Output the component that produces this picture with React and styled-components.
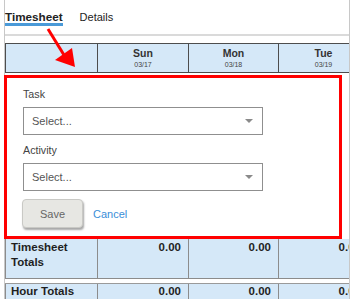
import React from 'react';
import styled, { createGlobalStyle } from 'styled-components';

const GlobalStyle = createGlobalStyle`
    html, body {
        margin: 0;
        padding: 0;
        background: #fff;
        overflow: hidden;
    }
    body {
        font-family: "Liberation Sans", Arial, sans-serif;
    }
`;

const Page = styled.div`
    position: relative;
    width: 352px;
    height: 299px;
    overflow: hidden;
`;

const Frame = styled.div`
    margin-left: 4px;
    width: 346px;
    height: 299px;
    box-sizing: border-box;
    padding: 0 1px;
    box-shadow: inset 1px 0 0 #c8c8c8, inset -1px 0 0 #c8c8c8;
`;

const TabBar = styled.div`
    display: flex;
    gap: 17px;
    height: 34px;
    border-bottom: 2px solid #dadada;
`;

const Tab = styled.div`
    padding-top: 11px;
    height: 12px;
    line-height: 12px;
    font-size: ${p => (p.$active ? '11.7px' : '11px')};
    font-weight: ${p => (p.$active ? 'bold' : 'normal')};
    color: #222;
    border-bottom: 3px solid ${p => (p.$active ? '#4a9ad8' : 'transparent')};
`;

const Row = styled.div`
    display: flex;
    overflow: hidden;
    box-sizing: border-box;
`;

const HeaderRow = styled(Row)`
    margin-top: 7px;
    height: 30px;
    border-top: 1px solid #4d4d4d;
    border-bottom: 1px solid #4d4d4d;
`;

const HeaderCell = styled.div`
    flex: 0 0 ${p => p.$w}px;
    box-sizing: border-box;
    border-left: 1px solid #4d4d4d;
    background: #d5e8f8;
    display: flex;
    flex-direction: column;
    align-items: center;
    padding-top: 3px;
`;

const Day = styled.div`
    font-size: 10.5px;
    line-height: 12px;
    font-weight: bold;
    color: #333;
`;

const DateText = styled.div`
    margin-top: 1.5px;
    font-size: 7px;
    line-height: 8px;
    color: #444;
`;

const EditPanel = styled.div`
    margin-top: 2px;
    margin-left: -1px;
    width: 338px;
    box-sizing: border-box;
    border: 3px solid #ff0000;
    background: #fff;
    padding: 10px 16px 8px;
    position: relative;
`;

const Label = styled.div`
    font-size: 10.7px;
    line-height: 13px;
    color: #444;
    margin-bottom: 6px;
`;

const SelectBox = styled.div`
    width: 240px;
    height: 28px;
    box-sizing: border-box;
    border: 1px solid #8f8f8f;
    display: flex;
    align-items: center;
    justify-content: space-between;
    padding: 0 9px 0 8px;
    font-size: 11px;
    color: #555;
    margin-bottom: ${p => p.$mb}px;
`;

const Actions = styled.div`
    display: flex;
    align-items: center;
    gap: 10px;
`;

const SaveButton = styled.button`
    margin-left: -1px;
    width: 61px;
    height: 29px;
    border: 1px solid #c9c9c5;
    border-radius: 4px;
    background: #e7e7e3;
    box-shadow: 1px 2px 2px rgba(0, 0, 0, 0.35);
    color: #666;
    font-family: "Liberation Sans", Arial, sans-serif;
    font-size: 11px;
    padding: 0;
`;

const CancelLink = styled.span`
    color: #3a8ed8;
    font-size: 11px;
`;

const TotalsRow = styled(Row)`
    height: ${p => p.$h}px;
    border-bottom: 1px solid #8c8c8c;
    ${p => (p.$gap ? 'margin-top: 4px; border-top: 1px solid #9a9a9a;' : '')}
`;

const TotalsCell = styled.div`
    flex: 0 0 ${p => p.$w}px;
    box-sizing: border-box;
    border-left: 1px solid #8c8c8c;
    background: #d5e8f8;
    padding: ${p => p.$pt}px 7px 0 5px;
    font-size: 11.5px;
    line-height: 15px;
    font-weight: bold;
    color: #1f1f1f;
    text-align: ${p => (p.$right ? 'right' : 'left')};
`;

const Overlay = styled.svg`
    position: absolute;
    left: 0;
    top: 0;
    pointer-events: none;
`;

// first column + Sun, Mon, Tue (Tue runs past the frame and is clipped)
const widths = [92, 91, 90, 90];
const days = [
    { day: 'Sun', date: '03/17' },
    { day: 'Mon', date: '03/18' },
    { day: 'Tue', date: '03/19' },
];

const Caret = () => (
    <svg width="8" height="4" viewBox="0 0 8 4">
        <polygon points="0,0 8,0 4,4" fill="#8a8a8a" />
    </svg>
);

const Totals = ({ label, h, gap, pt }) => (
    <TotalsRow $h={h} $gap={gap}>
        <TotalsCell $w={widths[0]} $pt={pt}>{label}</TotalsCell>
        {widths.slice(1).map((w, i) => (
            <TotalsCell key={i} $w={w} $pt={pt} $right>0.00</TotalsCell>
        ))}
    </TotalsRow>
);

const App = () => {
    return (
        <>
            <GlobalStyle />
            <Page>
                <Frame>
                    <TabBar>
                        <Tab $active>Timesheet</Tab>
                        <Tab>Details</Tab>
                    </TabBar>

                    <HeaderRow>
                        <HeaderCell $w={widths[0]} />
                        {days.map((d, i) => (
                            <HeaderCell key={d.day} $w={widths[i + 1]}>
                                <Day>{d.day}</Day>
                                <DateText>{d.date}</DateText>
                            </HeaderCell>
                        ))}
                    </HeaderRow>

                    <EditPanel>
                        <Label>Task</Label>
                        <SelectBox $mb={9}>
                            <span>Select...</span>
                            <Caret />
                        </SelectBox>
                        <Label>Activity</Label>
                        <SelectBox $mb={8}>
                            <span>Select...</span>
                            <Caret />
                        </SelectBox>
                        <Actions>
                            <SaveButton>Save</SaveButton>
                            <CancelLink>Cancel</CancelLink>
                        </Actions>
                    </EditPanel>

                    <Totals label={<>Timesheet<br />Totals</>} h={40} pt={1} />
                    <Totals label="Hour Totals" h={30} gap pt={0} />
                </Frame>

                <Overlay width="352" height="299">
                    <line x1="48" y1="29" x2="64" y2="55" stroke="#ff0000" strokeWidth="3" />
                    <polygon points="75,67 55,60 72,48" fill="#ff0000" />
                </Overlay>
            </Page>
        </>
    );
};

export default App;
